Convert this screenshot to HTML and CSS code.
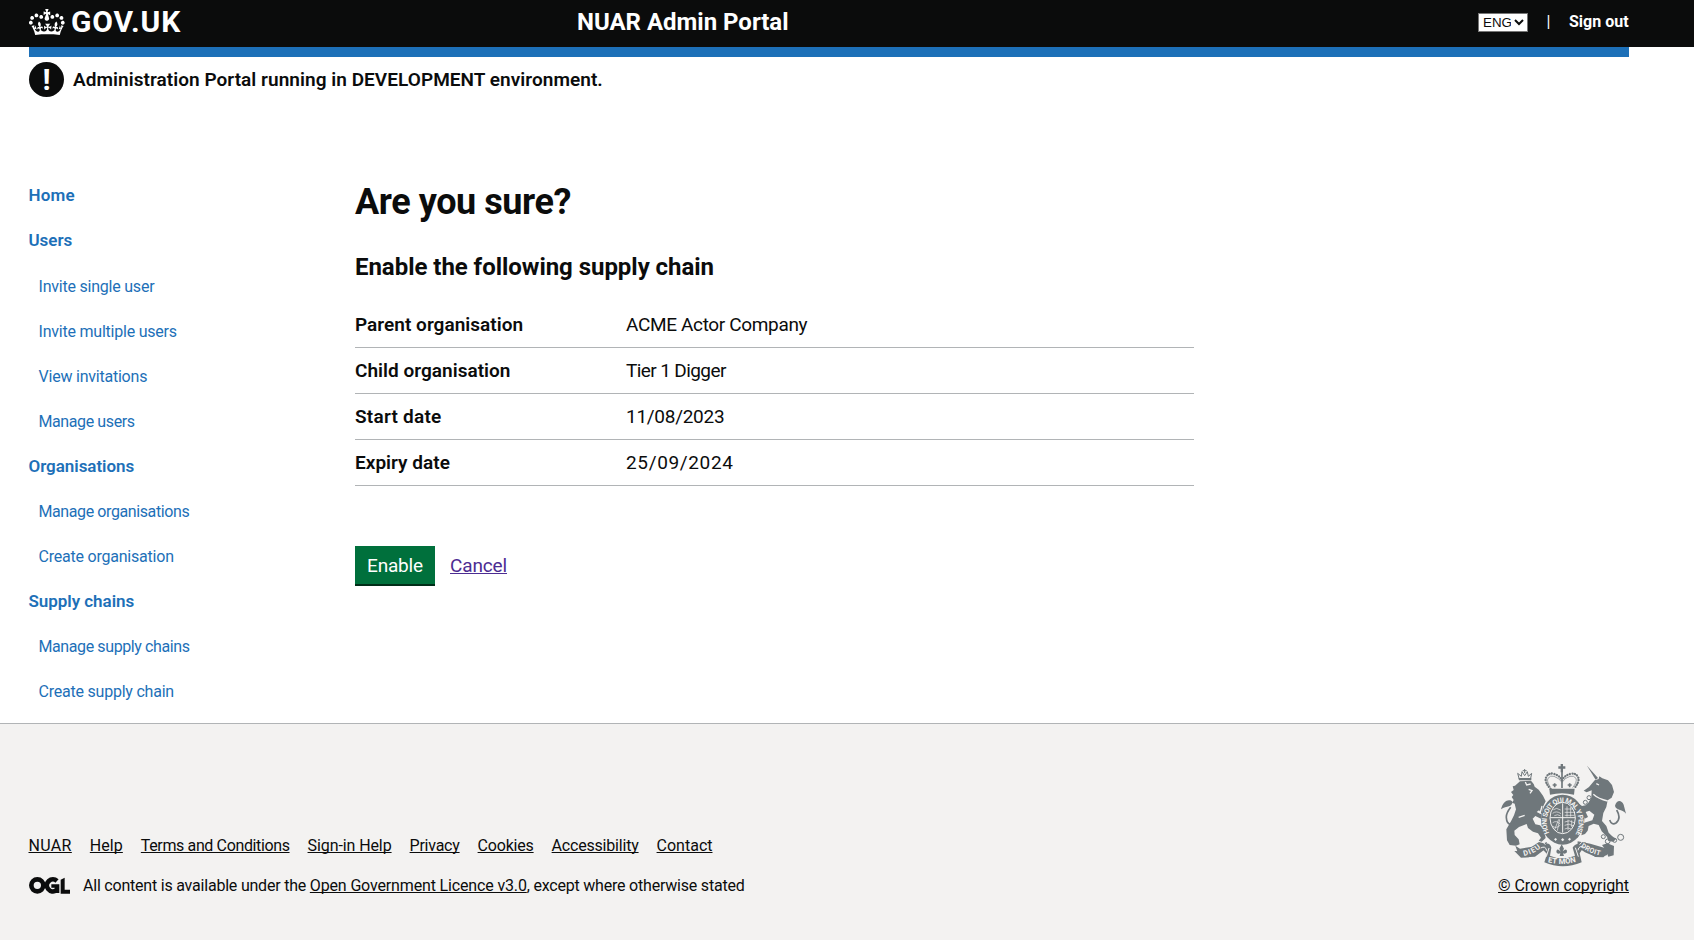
FILE: index.html
```
<!DOCTYPE html>
<html lang="en">
<head>
<meta charset="utf-8">
<title>NUAR Admin Portal</title>
<link rel="stylesheet" href="styles.css">
</head>
<body>
<header class="header">
  <div class="header-inner">
    <a class="logo" href="#">
      <svg class="crown" viewBox="0 0 36 32" aria-hidden="true"><path d="M6.7 12.2c1 .4 2.1-.1 2.5-1s-.1-2.1-1-2.5c-1-.4-2.1.1-2.5 1-.4 1 0 2.1 1 2.5m-4.3 2.5c1 .4 2.1-.1 2.5-1s-.1-2.1-1-2.5c-1-.4-2.1.1-2.5 1-.5 1 0 2.1 1 2.5m-1.3 4.8c1 .4 2.1-.1 2.5-1 .4-1-.1-2.1-1-2.5-1-.4-2.1.1-2.5 1-.4 1 0 2.1 1 2.5m10.4-5.8c1 .4 2.1-.1 2.5-1s-.1-2.1-1-2.5c-1-.4-2.1.1-2.5 1s0 2.1 1 2.5m17.4-1.5c-1 .4-2.1-.1-2.5-1s.1-2.1 1-2.5c1-.4 2.1.1 2.5 1 .5 1 0 2.1-1 2.5m4.3 2.5c-1 .4-2.1-.1-2.5-1s.1-2.1 1-2.5c1-.4 2.1.1 2.5 1 .5 1 0 2.1-1 2.5m1.3 4.8c-1 .4-2.1-.1-2.5-1s.1-2.1 1-2.5c1-.4 2.1.1 2.5 1s0 2.1-1 2.5m-10.4-5.8c-1 .4-2.1-.1-2.5-1s.1-2.1 1-2.5c1-.4 2.1.1 2.5 1 .5 1 0 2.1-1 2.5m-5.3-4.8 2.4 1.3V6.5l-2.4.8c-.1-.1-.1-.2-.2-.2s1-3 1-3h-3.4l1 3c-.1.1-.2.1-.2.2-.1.1-2.4-.7-2.4-.7v3.5L17 8.8c.1.1.1.2.2.2l-1.5 4c-.1.2-.1.4-.1.6 0 1.1.8 2 1.9 2.2h.7c1-.2 1.9-1.1 1.9-2.1 0-.2 0-.4-.1-.6l-1.1-4.1c-.1-.2 0-.2.1-.3m-1 20.3c4.6 0 8.9.3 12.8.9 1.1-4.6 2.4-6.8 3.8-8.8l-2.6-.9c.3 1.3.3 1.9 0 2.7-.4-.4-.8-1.1-1.1-2.3l-1.2 4c.7-.5 1.3-.8 2-.9-1.1 2.5-2.6 3.1-3.5 3-1.1-.2-1.7-1.2-1.5-2.1.3-1.2 1.5-1.5 2.1-.1 1.1-2.3-.8-3-2-2.3 1.9-1.9 2.1-3.5.6-5.6-2.1 1.6-2.1 3.2-1.2 5.5-1.2-1.4-3.2-.6-2.5 1.6.9-1.4 2.1-.5 1.9.8-.2 1.1-1.7 2.1-3.5 1.9-2.7-.2-2.9-2.1-2.9-3.6.7-.1 1.9.5 2.9 1.9l.4-4.3c-1.1 1.1-2.1 1.4-3.2 1.4.4-1.2 2.1-3 2.1-3h-5.4s1.7 1.9 2.1 3c-1.1 0-2.1-.2-3.2-1.4l.4 4.3c1-1.4 2.2-2 2.9-1.9-.1 1.5-.2 3.4-2.9 3.6-1.9.2-3.4-.8-3.5-1.9-.2-1.3 1-2.2 1.9-.8.7-2.3-1.2-3-2.5-1.6.9-2.2.9-3.9-1.2-5.5-1.5 2-1.3 3.7.6 5.6-1.2-.7-3.1 0-2 2.3.6-1.4 1.8-1.1 2.1.1.2.9-.3 1.9-1.5 2.1-.9.2-2.4-.5-3.5-3 .6 0 1.2.3 2 .9l-1.2-4c-.3 1.1-.7 1.9-1.1 2.3-.3-.8-.2-1.4 0-2.7l-2.9.9c1.3 2 2.6 4.2 3.7 8.8 4.1-.6 8.4-.9 12.9-.9"/></svg>
      <span class="logo-text">GOV.UK</span>
    </a>
    <a class="service" href="#">NUAR Admin Portal</a>
    <div class="account">
      <select class="language" aria-label="Language"><option>ENG</option></select>
      <span class="divider">|</span>
      <a class="sign-out" href="#">Sign out</a>
    </div>
  </div>
</header>
<div class="container">
  <div class="bar"></div>
  <div class="banner">
    <span class="banner-icon">!</span>
    <strong class="banner-text">Administration Portal running in DEVELOPMENT environment.</strong>
  </div>
  <div class="columns">
    <nav class="nav">
      <a class="nav-head wide" href="#">Home</a>
      <a class="nav-head last-top" href="#">Users</a>
      <a class="nav-link" href="#">Invite single user</a>
      <a class="nav-link" href="#">Invite multiple users</a>
      <a class="nav-link" href="#">View invitations</a>
      <a class="nav-link tight" href="#">Manage users</a>
      <a class="nav-head" href="#">Organisations</a>
      <a class="nav-link tight" href="#">Manage organisations</a>
      <a class="nav-link" href="#">Create organisation</a>
      <a class="nav-head" href="#">Supply chains</a>
      <a class="nav-link tight" href="#">Manage supply chains</a>
      <a class="nav-link" href="#">Create supply chain</a>
    </nav>
    <main class="main">
      <h1 class="title">Are you sure?</h1>
      <h2 class="subtitle">Enable the following supply chain</h2>
      <dl class="summary">
        <div class="row"><dt>Parent organisation</dt><dd class="company">ACME Actor Company</dd></div>
        <div class="row"><dt>Child organisation</dt><dd class="tier">Tier 1 Digger</dd></div>
        <div class="row"><dt class="start">Start date</dt><dd class="start-value">11/08/2023</dd></div>
        <div class="row"><dt>Expiry date</dt><dd class="expiry-value">25/09/2024</dd></div>
      </dl>
      <div class="actions">
        <button class="button" type="button">Enable</button>
        <a class="cancel" href="#">Cancel</a>
      </div>
    </main>
  </div>
</div>
<footer class="footer">
  <div class="footer-inner">
    <div class="meta">
      <ul class="links">
        <li><a class="l-nuar" href="#">NUAR</a></li>
        <li><a class="l-help" href="#">Help</a></li>
        <li><a class="l-terms" href="#">Terms and Conditions</a></li>
        <li><a class="l-signin" href="#">Sign-in Help</a></li>
        <li><a class="l-privacy" href="#">Privacy</a></li>
        <li><a class="l-cookies" href="#">Cookies</a></li>
        <li><a class="l-access" href="#">Accessibility</a></li>
        <li><a class="l-contact" href="#">Contact</a></li>
      </ul>
      <div class="licence">
        <svg class="ogl" viewBox="0 0 123 51" aria-label="OGL">
          <g fill="none" stroke="#0b0c0c" stroke-width="14">
            <circle cx="25" cy="25" r="18"/>
            <path d="M84 12a18 18 0 1 0-2 28"/>
          </g>
          <path fill="#0b0c0c" d="M67 22h24v26H80l-3-6V32H67zM95 8l12-6v36h16v12H95z"/>
        </svg>
        <span class="licence-text">All content is available under the <a class="licence-link" href="#">Open Government Licence v3.0</a>, except where otherwise stated</span>
      </div>
    </div>
    <div class="crown-copyright">
      <svg class="arms" viewBox="60 39 381 312" aria-hidden="true">
        <defs>
          <path id="garter" d="M208 249A48 59 0 1 1 288 249"/>
          <path id="motto-left" d="M132 318Q162 312 184 291"/>
          <path id="motto-mid" d="M203 337Q247 347 291 335"/>
          <path id="motto-right" d="M302 290Q328 311 364 317"/>
        </defs>
        <g fill="#6f777b">
          <!-- lion -->
          <path d="M115 84h39v7h-37z"/>
          <path d="M120 94l33-2 8 10 3 8 12 9 13 18 8 17-8 16-3 22-9-11-7 5 14 7-1 13-17-8-8 8 8 17 14 3 12 14 5 24-12 11-9-3 7-9-9-13-15-5-15-11-4-12-23 9-14 11 1 13 12 13 3 15-11 4-19-2-8-14-2-33 14-24 9-18 6-18-4-17-8-3 5-8-6-9 5-6-7-9 8-6-3-11 7-2z"/>
          <path d="M63 178c5-22 18-30 28-27 10 2 7 15-4 18-8 2-15 2-24 9z"/>
          <!-- unicorn -->
          <path d="M321 47l33 37-7 5z"/>
          <path d="M327 111l17-20 12-4 2-8 9 6 17 6 12 14 6 21-7 17-12 8-4 20-9 18-4 24 13 15 7 20 10 10 12 9-8 8-15-2-4-13-16-16-9-19-15-4-15 7-3 14-8 10-11 4 2-21 7-17 24-7 6-17-15-12-11 4 7 15-10 5-9-22-11-14-13-6-8-11 17 3 16 12 11-2 8-8 9-15 1-22-15 6-9-5z"/>
          <path d="M405 167c4-17 19-20 26-3l7 27c-12-16-31-9-33-24z"/>
          <path d="M366 285l16-5 20 8-1 28-16 4-8-20z"/>
          <path d="M120 296l-14-9 7 20 22 15 30-2 31-23 5-21-34 13zM367 292l22 6-9 18-32 5-33-14-23-15 1-18 38 7z"/>
          <!-- ribbon -->
          <path d="M103 303l32 1 42-28 14 4-6 15-38 27-24 1zM391 303l-32 1-44-27-14 4 7 14 38 26 24 1z"/>
          <path d="M181 291q26-22 33 2l-4 24q35 16 75 0l-7-24q13-21 33-1l-12 18 6 27q-57 24-112 0l8-25z"/>
          <!-- garter and crown -->
          <ellipse cx="248" cy="209" rx="65" ry="75"/>
          <path d="M242 42h7v7h7v7h-7v11h-7V56h-7v-7h7zM208 116h76l-2 18q-36-9-72 0z"/>
        </g>
        <g fill="none" stroke="#6f777b" stroke-width="5">
          <path d="M92 172q-14 18-13 31 1 18 13 21 17 1 15-15M410 180q15 25-2 39-13 8-19-9"/>
          <path d="M212 117q-19-21-14-34 8-17 25-11 16 5 23 19 8-15 24-19 18-5 25 11 4 13-14 34" stroke-width="7" stroke-linecap="round" stroke-dasharray="0.1 7.5"/>
          <path d="M212 113q-13-19-8-28 7-10 18-6 15 5 24 18 9-14 24-18 12-3 18 6 4 10-10 28" stroke-width="2"/>
          <path d="M246 65v49M224 112v-12m-6 5h12M269 112v-12m-6 5h12" stroke-width="5"/>
          <path d="M117 85l-4-15 11 9 2-14 8 12 8-12 3 14 10-9-3 15M134 57v12M128 62h12" stroke-width="3"/>
          <g stroke-width="3"><circle cx="327" cy="143" r="6"/><circle cx="316" cy="157" r="6"/><circle cx="370" cy="260" r="6"/><circle cx="383" cy="274" r="7"/><circle cx="404" cy="271" r="6"/><circle cx="422" cy="262" r="9"/></g>
        </g>
        <g fill="none" stroke="#f3f2f1">
          <ellipse cx="248" cy="204" rx="38" ry="47" stroke-width="3"/>
          <path d="M248 160v88M211 203h74" stroke-width="3"/>
          <path d="M220 179q9-8 22 1M218 190q11-9 25 1M223 197q10-6 19 1M218 218q12-8 22 4M218 229q12 8 23-4M224 239l12-31M232 242l7-34M254 177h26M254 187h31M254 196h29M254 216q13-8 28 2M254 226q12-8 27 2M254 237q9-6 20 0M261 169v31M272 171v29M264 209v32M275 211v20" stroke-width="2"/>
          <path d="M136 96l4 9 12-3M146 118l10 4-6 8M340 133q15 14 43 20M349 101l8 4M186 168l-6 22M116 202l18-6M142 240l18 12" stroke-width="4"/>
          <path d="M182 294q15-8 18 8M313 292q-16-8-19 9M207 294l-8 26M286 293l9 27M189 276l7 8M305 277l-6 7" stroke-width="3"/>
        </g>
        <g class="arms-text">
          <text font-size="21" textLength="240"><textPath href="#garter">HONI SOIT QUI MAL Y PENSE</textPath></text>
          <text font-size="22" textLength="57"><textPath href="#motto-left">DIEU</textPath></text>
          <text font-size="23" textLength="86"><textPath href="#motto-mid">ET MON</textPath></text>
          <text font-size="21" textLength="64"><textPath href="#motto-right">DROIT</textPath></text>
        </g>
        <path fill="#f3f2f1" d="M227 264l4 4-4 5-5-5zM248 264l5 5-5 5-5-5zM269 263l4 5-5 4-4-4z"/>
        <path fill="#f3f2f1" d="M222 287h52l6 25q-31 10-66 1z"/>
        <path fill="#6f777b" d="M245 283l7 13-4 8q14-13 13 3-5 6-12 3l3 8h-13l2-8q-10 3-12-4 1-14 13-1l-4-9z"/>
      </svg>
      <a class="copyright" href="#">© Crown copyright</a>
    </div>
  </div>
</footer>
</body>
</html>
```
FILE: styles.css
```
* { box-sizing: border-box; }

body {
  margin: 0;
  background: #fff;
  color: #0b0c0c;
  font-family: Roboto, "Liberation Sans", sans-serif;
  font-size: 19px;
  line-height: 25px;
}

a { text-decoration: none; white-space: nowrap; }

/* Header */
.header { height: 47px; background: #0b0c0c; }
.header-inner {
  display: grid;
  grid-template-columns: 548px 1fr auto;
  align-items: center;
  width: 1600px;
  height: 44px;
  margin-left: 29px;
  color: #fff;
}
.header a { color: #fff; font-weight: 700; }
.logo { display: flex; align-items: center; gap: 6px; }
.crown { width: 36px; height: 32px; margin-top: -2px; fill: #fff; }
.logo-text { padding-bottom: 2px; font-size: 30px; letter-spacing: 0.9px; }
.service { font-size: 24px; letter-spacing: -0.01px; }
.account { display: flex; align-items: center; font-size: 16px; }
.language {
  width: 50px;
  height: 19px;
  margin: 0;
  padding: 0;
  background: #fff;
  color: #0b0c0c;
  font: 13.33px "Liberation Sans", Arial, sans-serif;
}
.divider { width: 41px; padding-bottom: 2px; text-align: center; }
.sign-out { width: 60px; padding-bottom: 2px; letter-spacing: 0; }

/* Environment banner */
.container { width: 1600px; margin-left: 29px; }
.bar { height: 10px; background: #1d70b8; }
.banner { display: flex; align-items: center; gap: 9px; padding-top: 5px; }
.banner-icon {
  width: 35px;
  height: 35px;
  border-radius: 50%;
  background: #0b0c0c;
  color: #fff;
  font-size: 30px;
  font-weight: 700;
  line-height: 36px;
  text-align: center;
}
.banner-text { font-weight: 600; letter-spacing: 0.05px; }

/* Page columns */
.columns {
  display: grid;
  grid-template-columns: 326px 839px;
  height: 626px;
  padding-top: 76px;
}
.nav { display: flex; flex-direction: column; }
.nav a { color: #1d70b8; line-height: 45px; }
.nav-head { margin-left: -0.5px; font-size: 17px; font-weight: 600; letter-spacing: -0.04px; }
.nav-head.wide { letter-spacing: 0.2px; }
.nav-head.last-top { margin-bottom: 1px; }
.nav-link { padding-left: 9.5px; font-size: 16px; letter-spacing: -0.22px; }
.nav-link.tight { letter-spacing: -0.4px; }

/* Confirmation */
.title {
  margin: 9px 0 30px;
  font-size: 36px;
  font-weight: 700;
  line-height: 40px;
  letter-spacing: -0.43px;
}
.subtitle {
  margin: 0 0 20px;
  font-size: 24px;
  font-weight: 700;
  line-height: 30px;
  letter-spacing: -0.04px;
}
.summary { margin: 0 0 60px; }
.row {
  display: grid;
  grid-template-columns: 271px 1fr;
  align-items: center;
  height: 46px;
  border-bottom: 1px solid #b1b4b6;
}
.row dt { font-weight: 600; letter-spacing: 0.03px; }
.row dt.start { letter-spacing: 0.24px; }
.row dd { margin: 0; letter-spacing: -0.35px; }
.row dd.tier { letter-spacing: -0.6px; }
.row dd.start-value { letter-spacing: -0.28px; }
.row dd.expiry-value { letter-spacing: 0.65px; }
.actions { display: flex; align-items: flex-start; gap: 15px; }
.button {
  width: 80px;
  height: 38px;
  padding: 0;
  border: 0;
  background: #00703c;
  box-shadow: 0 2px 0 #002d18;
  color: #fff;
  font: inherit;
  letter-spacing: -0.17px;
}
.cancel {
  color: #4c2c92;
  line-height: 40px;
  letter-spacing: -0.14px;
  text-decoration: underline 1px;
  text-underline-offset: 1px;
}

/* Footer */
.footer {
  height: 217px;
  border-top: 1px solid #b1b4b6;
  background: #f3f2f1;
  font-size: 16px;
}
.footer-inner {
  display: flex;
  justify-content: space-between;
  align-items: flex-end;
  width: 1600px;
  margin-left: 29px;
  padding-top: 39px;
}
.footer a {
  color: #0b0c0c;
  text-decoration: underline 1px;
  text-underline-offset: 1px;
  text-decoration-skip-ink: none;
}
.links { display: flex; gap: 18px; margin: 0 0 15px -0.5px; padding: 0; list-style: none; }
.l-nuar { letter-spacing: 0.35px; }
.l-help { letter-spacing: 0.06px; }
.l-terms { letter-spacing: -0.37px; }
.l-signin { letter-spacing: -0.09px; }
.l-privacy { letter-spacing: -0.24px; }
.l-cookies, .l-access { letter-spacing: -0.2px; }
.licence { display: flex; align-items: center; gap: 13px; }
.ogl { width: 41px; height: 17px; }
.licence-text { letter-spacing: -0.21px; white-space: nowrap; }
.licence-link { letter-spacing: -0.15px; }
.crown-copyright { display: flex; flex-direction: column; align-items: flex-end; gap: 6px; }
.arms { width: 127px; height: 104px; margin-right: 2px; }
.arms-text { fill: #f3f2f1; font-family: Roboto, sans-serif; font-weight: 700; }
.copyright { letter-spacing: -0.09px; }
```
